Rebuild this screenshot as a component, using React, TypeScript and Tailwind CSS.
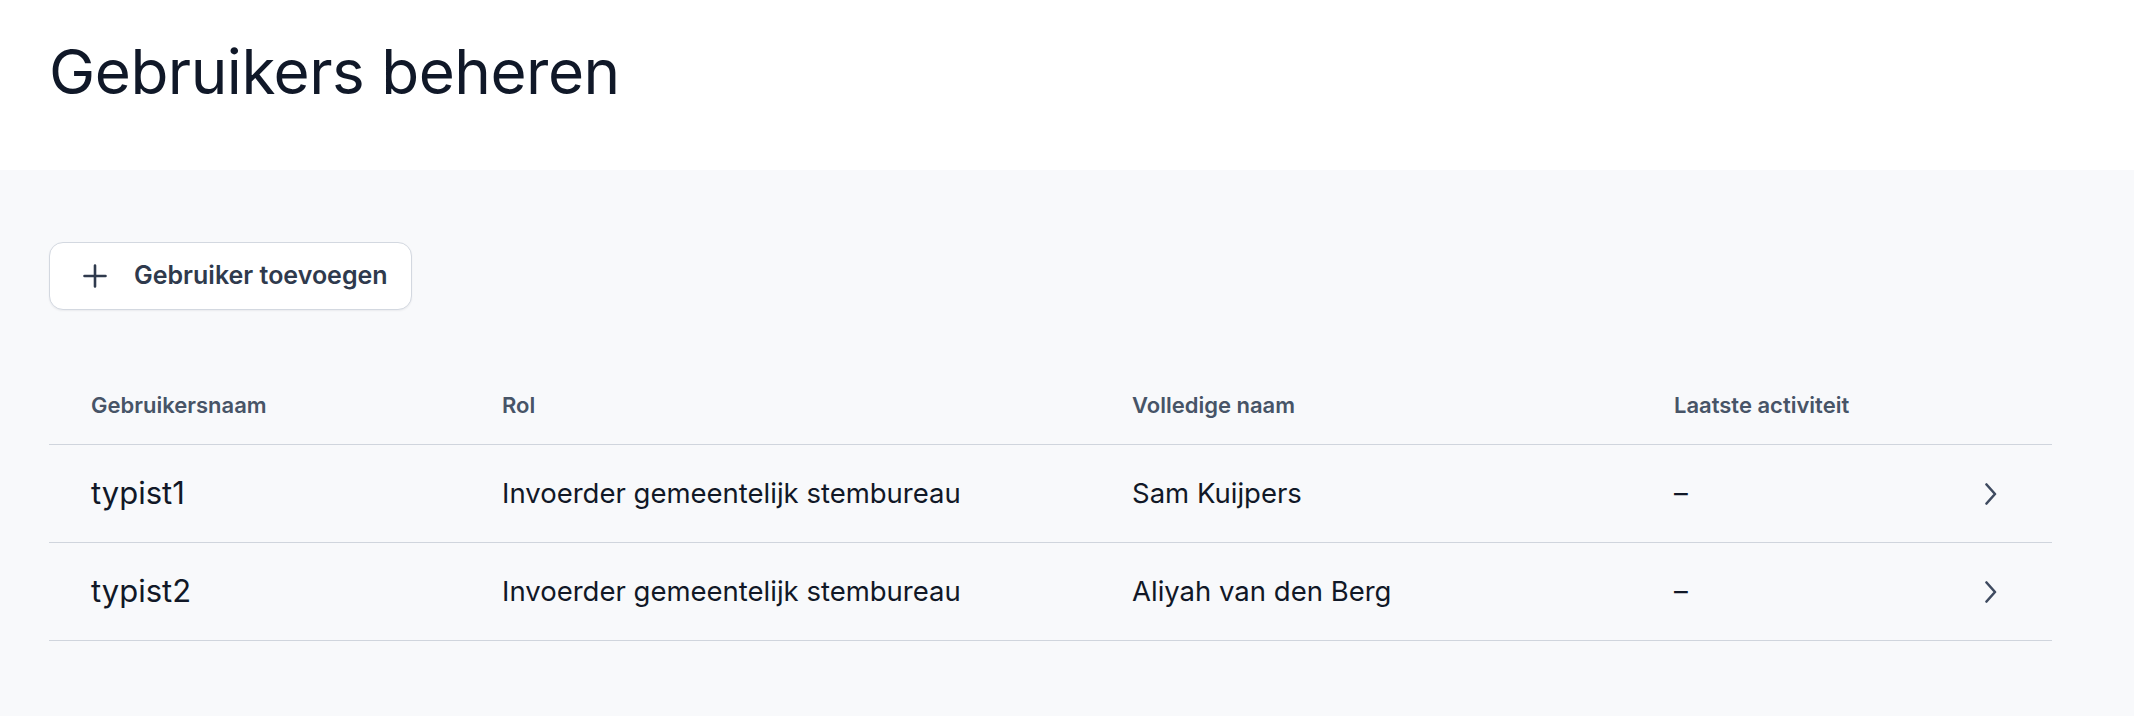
import React from "react";

const rows = [
  { user: "typist1", role: "Invoerder gemeentelijk stembureau", name: "Sam Kuijpers", last: "–" },
  { user: "typist2", role: "Invoerder gemeentelijk stembureau", name: "Aliyah van den Berg", last: "–" },
];

function Chevron() {
  return (
    <svg width="14" height="22" viewBox="0 0 14 22" fill="none" className="text-[#3f4b60]">
      <path d="M2.5 1.5 L11 11 L2.5 20.5" stroke="currentColor" strokeWidth="2.6" strokeLinecap="round" strokeLinejoin="round" />
    </svg>
  );
}

function Plus() {
  return (
    <svg width="24" height="24" viewBox="0 0 24 24" fill="none" className="text-[#2f3a4d]">
      <path d="M12 1.5 V22.5 M1.5 12 H22.5" stroke="currentColor" strokeWidth="2.6" strokeLinecap="round" />
    </svg>
  );
}

export default function App() {
  return (
    <div className="min-h-[716px] bg-[#f8f9fb] font-['Inter','Liberation_Sans',sans-serif] text-[#111827]">
      <header className="h-[170px] bg-white px-[49px] pt-[36px]">
        <h1 className="text-[62px] leading-[72px] font-normal tracking-[-0.5px] text-[#101828]">Gebruikers beheren</h1>
      </header>
      <main className="px-[49px] pt-[72px]">
        <button className="flex h-[68px] w-[363px] items-center gap-[27px] rounded-[14px] border border-[#d3d8e0] bg-white pl-[33px] shadow-[0_1px_2px_rgba(16,24,40,0.06)]">
          <Plus />
          <span className="text-[25px] font-semibold text-[#2f3a4d]">Gebruiker toevoegen</span>
        </button>
        <div className="mt-[57px] w-[2003px]">
          <div className="grid h-[78px] grid-cols-[411px_630px_542px_1fr] items-center border-b border-[#d0d5dd] pl-[42px] text-[22px] font-semibold text-[#475467]">
            <div>Gebruikersnaam</div>
            <div>Rol</div>
            <div>Volledige naam</div>
            <div>Laatste activiteit</div>
          </div>
          {rows.map((r) => (
            <div key={r.user} className="grid h-[98px] grid-cols-[411px_630px_542px_1fr_auto] items-center border-b border-[#d0d5dd] pl-[42px] pr-[54px] text-[27.5px] text-[#111827]">
              <div className="text-[31px]">{r.user}</div>
              <div>{r.role}</div>
              <div>{r.name}</div>
              <div>{r.last}</div>
              <Chevron />
            </div>
          ))}
        </div>
      </main>
    </div>
  );
}
